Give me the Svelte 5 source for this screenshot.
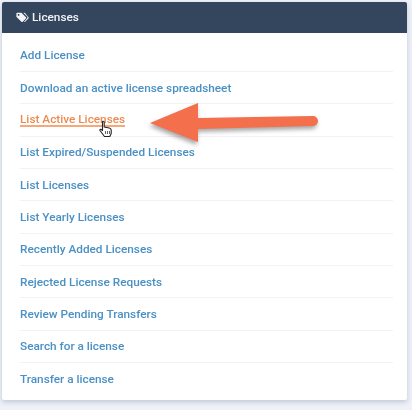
<script>
  const links = [
    "Add License",
    "Download an active license spreadsheet",
    "List Active Licenses",
    "List Expired/Suspended Licenses",
    "List Licenses",
    "List Yearly Licenses",
    "Recently Added Licenses",
    "Rejected License Requests",
    "Review Pending Transfers",
    "Search for a license",
    "Transfer a license"
  ];
</script>

<div class="page">
  <section class="card">
    <header>
      <svg class="tag" viewBox="0 0 16 13" width="13" height="11" aria-hidden="true">
        <path d="M0.5 1.6C0.5 1 1 .5 1.6 .5H6c.4 0 .7.1 1 .4l5.2 5.2c.5.5.5 1.2 0 1.7L8.300 11.700c-.5.5-1.200.5-1.700 0L1 6.200C.7 5.900.5 5.600.5 5.200Z M3.200 2.200a1.100 1.100 0 1 0 .01 0Z" fill="#f2f4f6" fill-rule="evenodd" />
        <path d="M9 .5h1.100c.4 0 .7.1 1 .4l4.200 5.200c.5.500.5 1.200 0 1.700l-4 4c-.4.400-1 .5-1.500.2l3.900-4.600c.6-.7.6-1.500 0-2.200Z" fill="#f2f4f6" />
      </svg>
      <span>Licenses</span>
    </header>
    <ul>
      {#each links as link}
        <li class:active={link === "List Active Licenses"}>
          <span class="link">{link}</span>
        </li>
      {/each}
    </ul>
  </section>

  <!-- callout drawn over the screenshot -->
  <svg class="arrow" viewBox="0 0 175 50" width="175" height="50" aria-hidden="true">
    <path d="M0 26 L48 6 V21 L163 19 A5 5 0 0 1 163 29 L48 32 V45 Z" fill="#f4704c" />
  </svg>
  <svg class="cursor" viewBox="0 0 14 18" width="14" height="18" aria-hidden="true">
    <path d="M3.500 1.500c.8-.6 1.700 0 1.700.8V7l5 1c1.200.3 2 .9 2 2v3.500L10.800 16.500H5.500L1 10.500c-.5-.9.600-1.600 1.300-1L3.500 10.500Z" fill="#fff" stroke="#222" stroke-width="1.100" stroke-linejoin="round" />
    <path d="M6.500 11v3M8.500 11v3M10.500 11v3" stroke="#222" stroke-width=".7" />
  </svg>
</div>

<style>
  :global(body) {
    margin: 0;
    background: #eef1f8;
  }

  .page {
    position: relative;
    width: 412px;
    height: 410px;
    padding: 2px 5px 0 2px;
    box-sizing: border-box;
    font-family: Roboto, "Liberation Sans", sans-serif;
    overflow: hidden;
    filter: blur(0.55px);
  }

  .card {
    background: #fff;
    border-radius: 2px;
    box-shadow: 0 2px 5px rgba(60, 70, 100, 0.25);
    height: 398px;
  }

  header {
    height: 31px;
    box-sizing: border-box;
    display: flex;
    align-items: center;
    gap: 3px;
    padding: 0 0 1px 14px;
    background: #34465d;
    border-radius: 2px 2px 0 0;
    color: #f2f4f6;
    font-size: 11.8px;
    font-weight: 500;
  }

  ul {
    list-style: none;
    margin: 0;
    padding: 6.5px 14px 0 18px;
  }

  li {
    height: 32.35px;
    box-sizing: border-box;
    display: flex;
    align-items: center;
    border-bottom: 1px solid #f1f2f4;
    color: #4a90c4;
    font-size: 11.8px;
    font-weight: 500;
  }

  li:last-child {
    border-bottom: none;
  }

  li.active {
    color: #ee8a50;
  }

  li.active .link {
    border-bottom: 2px solid #f6a878;
    line-height: 12px;
    margin-top: 1px;
  }

  .arrow {
    position: absolute;
    left: 150px;
    top: 97px;
    filter: drop-shadow(-1px 3px 2px rgba(60, 60, 60, 0.45));
  }

  .cursor {
    position: absolute;
    left: 99px;
    top: 120px;
  }
</style>
